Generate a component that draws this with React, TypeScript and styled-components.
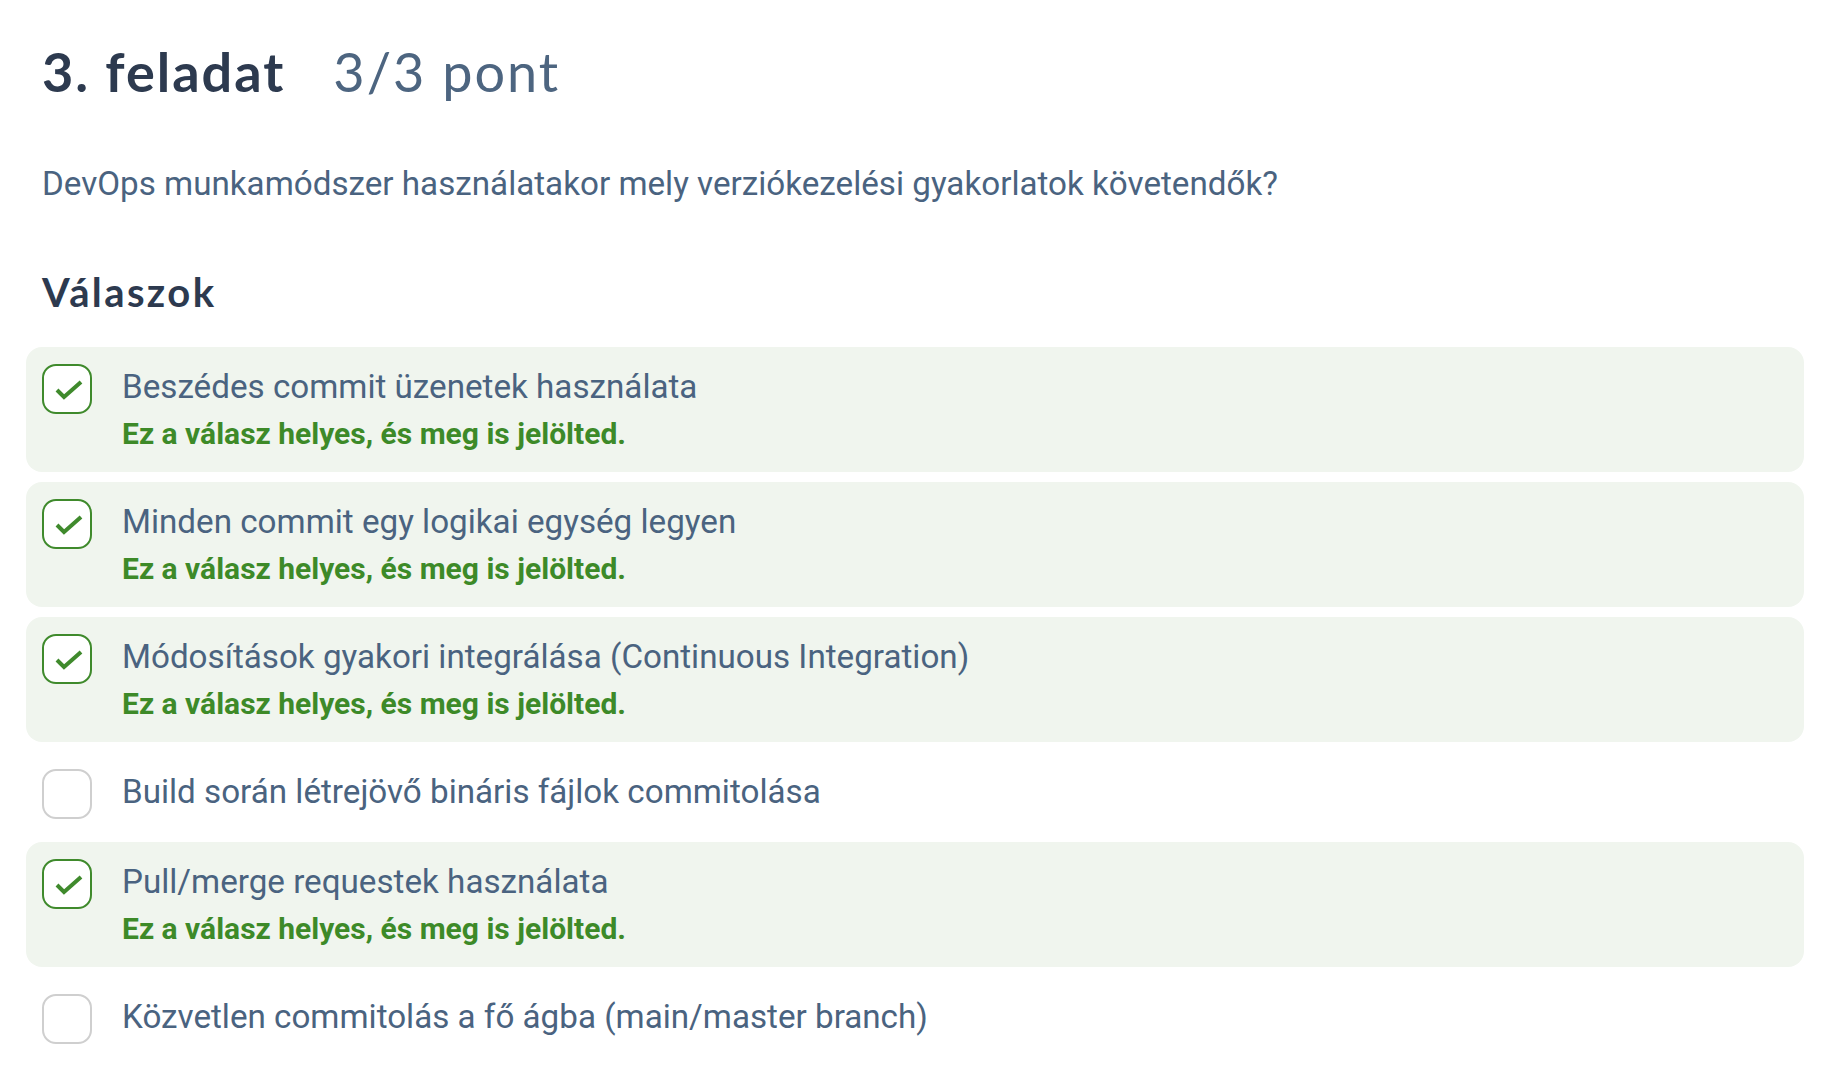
import React from "react";
import styled, { createGlobalStyle } from "styled-components";

const Global = createGlobalStyle`
  html, body { margin: 0; padding: 0; background: #ffffff; }
  body { font-family: Roboto, "Liberation Sans", sans-serif; }
`;

const Page = styled.main`
  padding: 30px 30px 40px 42px;
`;

const TitleRow = styled.h1`
  display: flex;
  align-items: baseline;
  gap: 48px;
  margin: 0;
  font-family: Lato, "Noto Sans", sans-serif;
  font-size: 54px;
  line-height: 84px;
  font-weight: 700;
  letter-spacing: 2px;
  color: #2d3a4f;
`;

const Points = styled.span`
  font-weight: 400;
  color: #4d6580;
`;

const Question = styled.p`
  margin: 46px 0 0;
  font-family: Roboto, sans-serif;
  font-size: 33.2px;
  line-height: 48px;
  color: #4a6380;
`;

const SectionTitle = styled.h2`
  margin: 56px 0 0;
  font-family: Lato, "Noto Sans", sans-serif;
  font-size: 40px;
  line-height: 56px;
  font-weight: 700;
  letter-spacing: 2.4px;
  color: #2d3a4f;
`;

const List = styled.ul`
  list-style: none;
  margin: 27px 0 0 -16px;
  padding: 0;
  display: flex;
  flex-direction: column;
  gap: 10px;
`;

const Item = styled.li<{ $correct: boolean }>`
  display: flex;
  align-items: flex-start;
  gap: 30px;
  padding: 16px;
  border-radius: 16px;
  background: ${(p) => (p.$correct ? "#f0f5ee" : "transparent")};
`;

const Box = styled.span<{ $checked: boolean }>`
  position: relative;
  flex: none;
  box-sizing: border-box;
  width: 50px;
  height: 50px;
  margin: 1px 0 -4px;
  border-radius: 14px;
  border: 2px solid ${(p) => (p.$checked ? "#3f8a2c" : "#cfcfcf")};
  background: #ffffff;
`;

const CheckSvg = styled.svg`
  position: absolute;
  left: -2px;
  top: -2px;
`;

const Body = styled.div`
  display: flex;
  flex-direction: column;
`;

const Label = styled.span`
  font-family: Roboto, sans-serif;
  font-size: 33.2px;
  line-height: 48px;
  color: #4a6380;
`;

const Feedback = styled.span`
  font-family: Roboto, sans-serif;
  font-size: 30px;
  line-height: 45px;
  font-weight: 700;
  color: #3d8a28;
`;

const Check = () => (
  <CheckSvg width="50" height="50" viewBox="0 0 50 50" fill="none">
    <path
      d="M15 26 L22 33 L39 18"
      stroke="#3f8a2c"
      strokeWidth="4"
      strokeLinecap="butt"
      strokeLinejoin="miter"
    />
  </CheckSvg>
);

const answers: { text: string; checked: boolean }[] = [
  { text: "Beszédes commit üzenetek használata", checked: true },
  { text: "Minden commit egy logikai egység legyen", checked: true },
  { text: "Módosítások gyakori integrálása (Continuous Integration)", checked: true },
  { text: "Build során létrejövő bináris fájlok commitolása", checked: false },
  { text: "Pull/merge requestek használata", checked: true },
  { text: "Közvetlen commitolás a fő ágba (main/master branch)", checked: false },
];

export default function App() {
  return (
    <>
      <Global />
      <Page>
        <TitleRow>
          <span>3. feladat</span>
          <Points>3/3 pont</Points>
        </TitleRow>
        <Question>
          DevOps munkamódszer használatakor mely verziókezelési gyakorlatok követendők?
        </Question>
        <SectionTitle>Válaszok</SectionTitle>
        <List>
          {answers.map((a) => (
            <Item key={a.text} $correct={a.checked}>
              <Box $checked={a.checked}>{a.checked && <Check />}</Box>
              <Body>
                <Label>{a.text}</Label>
                {a.checked && <Feedback>Ez a válasz helyes, és meg is jelölted.</Feedback>}
              </Body>
            </Item>
          ))}
        </List>
      </Page>
    </>
  );
}
